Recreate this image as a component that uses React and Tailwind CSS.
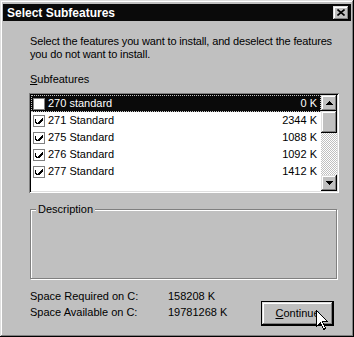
import React from 'react';

const features = [
  { name: '270 standard', size: '0 K', checked: false },
  { name: '271 Standard', size: '2344 K', checked: true },
  { name: '275 Standard', size: '1088 K', checked: true },
  { name: '276 Standard', size: '1092 K', checked: true },
  { name: '277 Standard', size: '1412 K', checked: true },
];

const raised =
  'shadow-[inset_-1px_-1px_0_#000,inset_1px_1px_0_#dfdfdf,inset_-2px_-2px_0_#808080,inset_2px_2px_0_#fff]';

const CheckBox = ({ checked }) => (
  <span className="w-[12px] h-[12px] border border-[#808080] bg-white flex items-center justify-center shrink-0">
    {checked && (
      <svg width="8" height="7" viewBox="0 0 8 7" shapeRendering="crispEdges">
        <path d="M0 2h1v3h1v1h1v-1h1v-1h1v-1h1v-1h1v-1h1v3h-1v1h-1v1h-1v1h-1v1h-2v-1h-1v-1h-1z" fill="#000" />
      </svg>
    )}
  </span>
);

const Arrow = ({ down }) => (
  <svg width="7" height="4" viewBox="0 0 7 4" shapeRendering="crispEdges">
    {down ? <path d="M0 0h7L3.5 4z" fill="#000" /> : <path d="M3.5 0L7 4H0z" fill="#000" />}
  </svg>
);

const App = () => {
  return (
    <div
      className={`w-[354px] h-[337px] bg-[#c0c0c0] pt-[4px] px-[3px] relative ${raised} font-['Liberation_Sans',Arial,sans-serif] text-[11px] text-black`}
    >
      {/* title bar */}
      <div className="h-[17px] bg-[#0a0a0a] flex items-center justify-between pl-[4px] pr-[2px]">
        <span className="text-white font-bold text-[12px] leading-none">Select Subfeatures</span>
        <button className={`w-[16px] h-[14px] bg-[#c0c0c0] flex items-center justify-center ${raised}`}>
          <svg width="8" height="7" viewBox="0 0 8 7">
            <path d="M0.5 0.5L7.5 6.5M7.5 0.5L0.5 6.5" stroke="#000" strokeWidth="1.6" />
          </svg>
        </button>
      </div>

      <div className="pl-[26px]">
        <p className="mt-[14px] ml-[1px] leading-[13px] tracking-[-0.15px]">
          Select the features you want to install, and deselect the features
          <br />
          you do not want to install.
        </p>

        <div className="mt-[12px] ml-[1px] leading-[13px]">
          <span className="underline">S</span>ubfeatures
        </div>

        {/* list box */}
        <div className="mt-[7px] w-[310px] h-[100px] p-[2px] bg-white flex shadow-[inset_1px_1px_0_#808080,inset_-1px_-1px_0_#fff,inset_2px_2px_0_#000,inset_-2px_-2px_0_#dfdfdf]">
          <div className="flex-1 flex flex-col">
            {features.map((f, i) => (
              <div
                key={f.name}
                className={`h-[17px] flex items-center pl-[2px] pr-[4px] ${
                  i === 0 ? 'bg-[#0a0a0a] text-white outline-1 outline-dotted outline-[#c0c0c0] -outline-offset-1' : ''
                }`}
              >
                <CheckBox checked={f.checked} />
                <span className="ml-[3px] flex-1">{f.name}</span>
                <span>{f.size}</span>
              </div>
            ))}
          </div>
          <div className="w-[16px] flex flex-col">
            <div className={`h-[16px] bg-[#c0c0c0] flex items-center justify-center ${raised}`}>
              <Arrow />
            </div>
            <div className={`h-[22px] bg-[#c0c0c0] ${raised}`} />
            <div className="flex-1 bg-[repeating-conic-gradient(#fff_0_25%,#c0c0c0_0_50%)] bg-[length:2px_2px]" />
            <div className={`h-[16px] bg-[#c0c0c0] flex items-center justify-center ${raised}`}>
              <Arrow down />
            </div>
          </div>
        </div>

        {/* description group */}
        <fieldset className="mt-[10px] ml-[1px] w-[307px] h-[76px] border border-[#808080] shadow-[1px_1px_0_#fff,inset_1px_1px_0_#fff] px-[5px]">
          <legend className="px-[2px] leading-[13px] bg-[#c0c0c0]">Description</legend>
        </fieldset>

        <div className="mt-[9px] ml-[1px] flex">
          <div className="flex flex-col w-[231px]">
            <div className="flex h-[16px] items-center">
              <span className="w-[138px]">Space Required on C:</span>
              <span>158208 K</span>
            </div>
            <div className="flex h-[16px] items-center">
              <span className="w-[138px]">Space Available on C:</span>
              <span>19781268 K</span>
            </div>
          </div>
          <button
            className={`mt-[13px] w-[73px] h-[25px] border border-black bg-[#c0c0c0] ${raised} flex items-center justify-center`}
          >
            <span>
              <span className="underline">C</span>ontinue
            </span>
          </button>
        </div>
      </div>

      {/* mouse cursor */}
      <svg className="absolute left-[316px] top-[310px]" width="13" height="21" viewBox="0 0 13 21" shapeRendering="crispEdges">
        <path d="M0.5 0.5V16.5L4.5 12.5L7.5 19.5L9.5 18.5L6.5 11.5H11.5Z" fill="#fff" stroke="#000" strokeWidth="1" />
      </svg>
    </div>
  );
};

export default App;
